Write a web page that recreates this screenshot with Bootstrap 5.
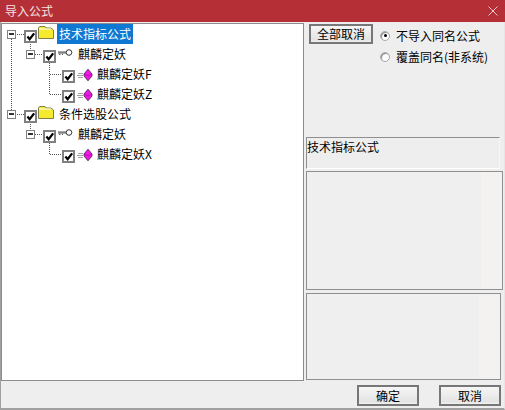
<!DOCTYPE html>
<html lang="zh"><head><meta charset="utf-8"><title>导入公式</title>
<link href="https://cdn.jsdelivr.net/npm/bootstrap@5.3.0/dist/css/bootstrap.min.css" rel="stylesheet">
<style>
html,body{width:505px;height:410px;margin:0;overflow:hidden;background:#eeeeee;}
body,button{font-family:"Noto Sans CJK SC","Liberation Sans",sans-serif;font-size:12px;line-height:14px;color:#000;}
.dlg{width:505px;height:410px;border-bottom:2px solid #a0a0a0;border-left:1px solid #a0a0a0;border-right:1px solid #e6e6e6;}
.ttl{height:22px;margin:0 -1px;background:#b43036;color:#f5e4e4;padding:0 5px;flex:none;}
.tree{width:303px;height:358px;margin-top:1px;background:#fff;border:1px solid #8c8c8c;position:relative;flex:none;}
.lines{position:absolute;left:0;top:0;}
.trow{height:20px;position:relative;}
.l0{padding-left:5px}.l1{padding-left:24px}.l2{padding-left:43px}
.exp{width:9px;height:9px;border:1px solid #808080;background:#fff;position:relative;flex:none;margin-top:1px;}
.exp::after{content:"";position:absolute;left:1px;right:1px;top:2px;height:2px;background:#333;}
.chk{width:13px;height:13px;border:2px solid #808080;background:#fff;flex:none;margin-top:5px;display:flex;position:relative;}
.chk svg{flex:none;margin:0 -1px 0 0;}
.gap0{margin-left:8px}
.gap1{margin-left:17px}
.ic-folder{margin:-3px 3px 0 1px;flex:none;}
.ic-key{margin:-3px 2px 0 2px;flex:none;}
.ic-gem{margin:1px 2px 0 2px;flex:none;}
.lbl{white-space:nowrap;padding:3px 2px;line-height:14px;}
.sel{background:#0f78d2;color:#fff;}
.btnw{font-size:12px;line-height:14px;padding:0;border:2px solid #777;border-radius:0;background:linear-gradient(#f6f6f6,#e4e4e4 85%,#f0f0f0);color:#000;}
.btnw:hover{background:#eee;border-color:#777;color:#000;}
.side{width:198px;margin-left:2px;flex:none;}
.b-all{width:64px;height:20px;margin:2px 0 0 3px;flex:none;}
.dot{width:10px;height:10px;border-radius:50%;background:#fff;border:1px solid #a8a8a8;box-shadow:inset 1px 1px 1px #888;flex:none;position:relative;}
.dot.on::after{content:"";position:absolute;left:2.5px;top:2.5px;width:3px;height:3px;border-radius:50%;background:#000;}
.radios{margin-left:7px;margin-top:3px;}
.radio-row{height:21px;}
.radio-row span{margin-left:6px;}
.top-area{height:115px;flex:none;}
.info{width:194px;height:32px;padding:2px 0 0 0;border:1px solid #8f8f8f;border-right-color:#f6f6f6;border-bottom-color:#fff;background:#eeeeee;flex:none;}
.mid{width:197px;height:119px;margin:2px 0 0 0;border:1px solid #8f8f8f;background:linear-gradient(90deg,#efefef 89%,#f3f2f0 89%);flex:none;}
.low{width:195px;height:87px;margin:3px 0 0 0;border:1px solid #8f8f8f;background:linear-gradient(90deg,#efefef 89%,#f3f2f0 89%);flex:none;}
.foot{height:27px;flex:none;padding:4px 3px 0 0;gap:20px;}
.foot .btnw{width:62px;height:21px;}
</style></head><body>
<div class="dlg d-flex flex-column">
  <div class="ttl d-flex align-items-center justify-content-between"><span>导入公式</span>
    <svg width="14" height="14" viewBox="0 0 14 14"><path d="M2.500 2.500l9 9M11.500 2.500l-9 9" stroke="#e9c9c9" fill="none"/></svg></div>
  <div class="d-flex flex-grow-1">
    <div class="tree">
      <svg class="lines" width="200" height="160"><g stroke="#555" stroke-dasharray="1 1" fill="none">
        <path d="M9.500 15V86M15 10.500H22M15 90.500H22"/>
        <path d="M28.500 20V26M33 30.500H41M47.500 39V71M48 50.500H60M48 70.500H60"/>
        <path d="M28.500 100V106M33 110.500H41M47.500 119V131M48 130.500H60"/></g></svg>
      <div class="trow l0 d-flex align-items-center"><span class="exp"></span><span class="chk gap0"><svg width="10" height="9" viewBox="0 0 10 10"><path d="M1 5l2.500 3 5-6.500" stroke="#000" stroke-width="2.500" fill="none"/></svg></span>
        <svg class="ic-folder" width="16" height="13" viewBox="0 0 16 13"><path d="M.5 3V1.500L2 .5H7L8 2H13L15.500 4V12.500H.5Z" fill="#f6ea30" stroke="#80804a"/><path d="M1 3H13" stroke="#fff"/></svg>
        <span class="lbl sel">技术指标公式</span></div>
      <div class="trow l1 d-flex align-items-center"><span class="exp"></span><span class="chk gap0"><svg width="10" height="9" viewBox="0 0 10 10"><path d="M1 5l2.500 3 5-6.500" stroke="#000" stroke-width="2.500" fill="none"/></svg></span>
        <svg class="ic-key" width="16" height="8" viewBox="0 0 16 8"><path d="M0 3H8M0 4H8M1 5.500H2.500M4 5.500H5" stroke="#555" fill="none"/><circle cx="11" cy="3.500" r="2.800" fill="#fff" stroke="#333"/></svg>
        <span class="lbl">麒麟定妖</span></div>
      <div class="trow l2 d-flex align-items-center"><span class="chk gap1"><svg width="10" height="9" viewBox="0 0 10 10"><path d="M1 5l2.500 3 5-6.500" stroke="#000" stroke-width="2.500" fill="none"/></svg></span>
        <svg class="ic-gem" width="16" height="12" viewBox="0 0 16 12"><path d="M1 4.500H6M0 6.500H6M1 8.500H6" stroke="#a0a0a0" fill="none"/><path d="M11 .2L15 5V7L11 11.800L7 7V5Z" fill="#f014e6" stroke="#402040" stroke-width=".8"/><path d="M7.500 5L11 7L14.500 5" stroke="#a010a0" stroke-width=".7" fill="none"/></svg>
        <span class="lbl">麒麟定妖F</span></div>
      <div class="trow l2 d-flex align-items-center"><span class="chk gap1"><svg width="10" height="9" viewBox="0 0 10 10"><path d="M1 5l2.500 3 5-6.500" stroke="#000" stroke-width="2.500" fill="none"/></svg></span>
        <svg class="ic-gem" width="16" height="12" viewBox="0 0 16 12"><path d="M1 4.500H6M0 6.500H6M1 8.500H6" stroke="#a0a0a0" fill="none"/><path d="M11 .2L15 5V7L11 11.800L7 7V5Z" fill="#f014e6" stroke="#402040" stroke-width=".8"/><path d="M7.500 5L11 7L14.500 5" stroke="#a010a0" stroke-width=".7" fill="none"/></svg>
        <span class="lbl">麒麟定妖Z</span></div>
      <div class="trow l0 d-flex align-items-center"><span class="exp"></span><span class="chk gap0"><svg width="10" height="9" viewBox="0 0 10 10"><path d="M1 5l2.500 3 5-6.500" stroke="#000" stroke-width="2.500" fill="none"/></svg></span>
        <svg class="ic-folder" width="16" height="13" viewBox="0 0 16 13"><path d="M.5 3V1.500L2 .5H7L8 2H13L15.500 4V12.500H.5Z" fill="#f6ea30" stroke="#80804a"/><path d="M1 3H13" stroke="#fff"/></svg>
        <span class="lbl">条件选股公式</span></div>
      <div class="trow l1 d-flex align-items-center"><span class="exp"></span><span class="chk gap0"><svg width="10" height="9" viewBox="0 0 10 10"><path d="M1 5l2.500 3 5-6.500" stroke="#000" stroke-width="2.500" fill="none"/></svg></span>
        <svg class="ic-key" width="16" height="8" viewBox="0 0 16 8"><path d="M0 3H8M0 4H8M1 5.500H2.500M4 5.500H5" stroke="#555" fill="none"/><circle cx="11" cy="3.500" r="2.800" fill="#fff" stroke="#333"/></svg>
        <span class="lbl">麒麟定妖</span></div>
      <div class="trow l2 d-flex align-items-center"><span class="chk gap1"><svg width="10" height="9" viewBox="0 0 10 10"><path d="M1 5l2.500 3 5-6.500" stroke="#000" stroke-width="2.500" fill="none"/></svg></span>
        <svg class="ic-gem" width="16" height="12" viewBox="0 0 16 12"><path d="M1 4.500H6M0 6.500H6M1 8.500H6" stroke="#a0a0a0" fill="none"/><path d="M11 .2L15 5V7L11 11.800L7 7V5Z" fill="#f014e6" stroke="#402040" stroke-width=".8"/><path d="M7.500 5L11 7L14.500 5" stroke="#a010a0" stroke-width=".7" fill="none"/></svg>
        <span class="lbl">麒麟定妖X</span></div>
    </div>
    <div class="side d-flex flex-column">
      <div class="top-area d-flex align-items-start">
        <button type="button" class="btn btnw b-all">全部取消</button>
        <div class="radios">
          <div class="radio-row d-flex align-items-center"><i class="dot on"></i><span>不导入同名公式</span></div>
          <div class="radio-row d-flex align-items-center"><i class="dot"></i><span>覆盖同名(非系统)</span></div>
        </div>
      </div>
      <div class="info">技术指标公式</div>
      <div class="mid"></div>
      <div class="low"></div>
    </div>
  </div>
  <div class="foot d-flex justify-content-end">
    <button type="button" class="btn btnw">确定</button>
    <button type="button" class="btn btnw">取消</button>
  </div>
</div>
<script src="https://cdn.jsdelivr.net/npm/bootstrap@5.3.0/dist/js/bootstrap.bundle.min.js"></script>
</body></html>
